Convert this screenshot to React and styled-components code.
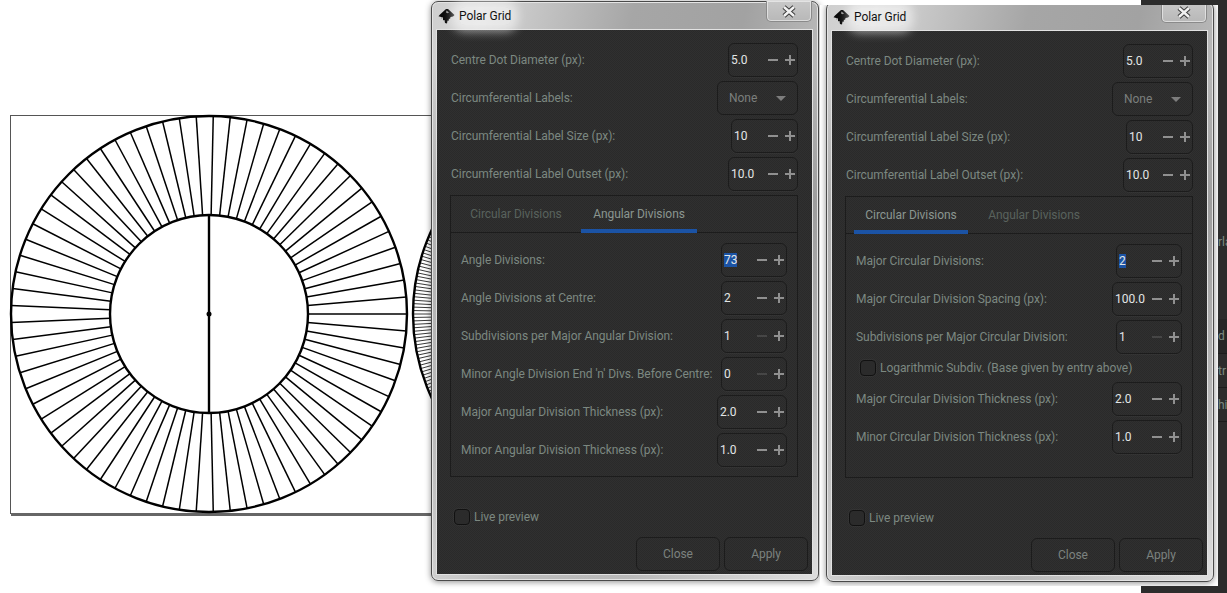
import React from 'react';
import styled, { createGlobalStyle } from 'styled-components';

const GlobalStyle = createGlobalStyle`
  html, body { margin: 0; padding: 0; background: #fff; overflow: hidden; }
  * { box-sizing: border-box; }
`;

const Desktop = styled.div`
  position: relative;
  width: 1227px;
  height: 593px;
  overflow: hidden;
  background: #fff;
  font-family: Roboto, "Liberation Sans", sans-serif;
  font-size: 12px;
  letter-spacing: -0.05px;
`;

const Drawing = styled.svg`
  position: absolute;
  left: 0;
  top: 0;
`;

const BehindPanel = styled.div`
  position: absolute;
  left: 1141px;
  top: 0;
  width: 86px;
  height: 593px;
  padding: 235px 0 0 77px;
  background: #2c2c2c;
  color: #7d8a82;
`;

const BehindRow = styled.div`
  display: flex;
  align-items: ${(p) => (p.$top ? 'flex-start' : 'center')};
  height: ${(p) => p.$h}px;
  white-space: nowrap;
  border-bottom: ${(p) => (p.$line ? '1px solid #1c1c1c' : '0')};
  background: ${(p) => (p.$dark ? '#262626' : 'transparent')};
`;

const ShotClip = styled.div`
  position: absolute;
  left: 820px;
  top: 5px;
  width: 398px;
  height: 581px;
  overflow: hidden;
  background: #fff;
`;

const Window = styled.div`
  position: absolute;
  left: ${(p) => p.$left}px;
  top: ${(p) => p.$top}px;
  width: 388px;
  height: 580px;
  padding: 28px 6px 6px 5px;
  border: 1px solid #4a4a4a;
  border-radius: 7px;
  background:
    linear-gradient(180deg, rgba(255, 255, 255, 0) 0 60px, rgba(70, 70, 70, 0.28) 200px, rgba(70, 70, 70, 0.12) 420px, rgba(255, 255, 255, 0.25) 100%),
    linear-gradient(102deg, #cfcfcf 0%, #d6d6d6 10%, #a6a6a6 40%, #a2a2a2 62%, #bdbdbd 82%, #d4d4d4 100%);
  box-shadow: 0 1px 6px rgba(0, 0, 0, 0.45), inset 0 0 0 1px #e4e4e4;
`;

const TitleBar = styled.div`
  position: absolute;
  left: 6px;
  top: 5px;
  display: flex;
  align-items: center;
  gap: 4px;
  color: #111;
  font-size: 12px;
  line-height: 18px;
`;

const TitleText = styled.span`
  background: rgba(255, 255, 255, 0.5);
  box-shadow: 0 0 10px 7px rgba(255, 255, 255, 0.5);
  border-radius: 6px;
`;

const CloseButton = styled.div`
  position: absolute;
  right: 6px;
  top: -1px;
  width: 46px;
  height: 21px;
  display: flex;
  align-items: center;
  justify-content: center;
  border: 1px solid #8a8a8a;
  border-top: 0;
  border-radius: 0 0 5px 5px;
  background: linear-gradient(#c8c8c8, #b8b8b8);
  box-shadow: inset 0 0 0 1px rgba(255, 255, 255, 0.5);
`;

const Body = styled.div`
  display: flex;
  flex-direction: column;
  height: 544px;
  padding: 13px 14px 0;
  background-color: #2d2d2d;
  background-image: conic-gradient(#2a2a2a 25%, #303030 0 50%, #2a2a2a 0 75%, #303030 0);
  background-size: 2px 2px;
  box-shadow: 0 0 0 1px #e2e2e2;
`;

const Rows = styled.div`
  display: flex;
  flex-direction: column;
  gap: 4px;
`;

const Row = styled.div`
  display: flex;
  align-items: center;
  justify-content: space-between;
  height: 34px;
`;

const Label = styled.span`
  color: #7c8881;
  white-space: nowrap;
`;

const Spin = styled.div`
  display: flex;
  flex: none;
  align-items: center;
  width: ${(p) => p.$w}px;
  height: 34px;
  padding: 0 2px;
  border: 1px solid #1c1c1c;
  border-radius: 6px;
  box-shadow: 0 1px 0 rgba(255, 255, 255, 0.03);
`;

const Value = styled.span`
  color: #e2e6e6;
  line-height: 14px;
  background: ${(p) => (p.$selected ? '#1b53a5' : 'transparent')};
`;

const SpinIcons = styled.div`
  display: flex;
  gap: 7px;
  margin-left: auto;
`;

const SpinIcon = styled.svg`
  display: block;
  width: 10px;
  height: 10px;
  fill: ${(p) => (p.$off ? '#464646' : '#909090')};
`;

const Select = styled.div`
  display: flex;
  align-items: center;
  justify-content: space-between;
  width: 81px;
  height: 34px;
  padding: 0 11px 0 11px;
  color: #7b7f7d;
  border: 1px solid #1c1c1c;
  border-radius: 6px;
`;

const Arrow = styled.span`
  width: 0;
  height: 0;
  border-left: 5px solid transparent;
  border-right: 5px solid transparent;
  border-top: 5px solid #7d7d7d;
`;

const TabBox = styled.div`
  display: flex;
  flex-direction: column;
  height: 282px;
  margin: 4px 0 0 -1px;
  border: 1px solid #1c1c1c;
`;

const TabHeader = styled.div`
  display: flex;
  flex: none;
  height: 37px;
  padding-left: 8px;
  border-bottom: 1px solid #1c1c1c;
`;

const Tab = styled.div`
  display: flex;
  align-items: center;
  justify-content: center;
  width: ${(p) => p.$w}px;
  height: 37px;
  margin-right: ${(p) => p.$gap}px;
  padding-bottom: 2px;
  color: ${(p) => (p.$active ? '#8b9690' : '#59625d')};
  box-shadow: ${(p) => (p.$active ? 'inset 0 -4px 0 #1b53a5' : 'none')};
`;

const TabRows = styled(Rows)`
  padding: 10px 10px 0 10px;
`;

const CheckRow = styled.div`
  display: flex;
  align-items: center;
  gap: 4px;
  height: ${(p) => p.$h}px;
  margin: ${(p) => p.$margin};
  color: #7c8881;
`;

const Box = styled.span`
  width: 16px;
  height: 16px;
  border: 1px solid #111;
  border-radius: 4px;
  background: #2b2b2b;
  box-shadow: 0 0 0 1px rgba(255, 255, 255, 0.03);
`;

const Footer = styled.div`
  display: flex;
  justify-content: flex-end;
  gap: 4px;
  margin: 10px -10px 0 0;
`;

const Button = styled.div`
  display: flex;
  align-items: center;
  justify-content: center;
  width: 84px;
  height: 34px;
  color: #7c827f;
  border: 1px solid #1c1c1c;
  border-radius: 6px;
`;

const R_OUT = 198;
const R_IN = 99;

// rays run from the +x axis, counter-clockwise, as the polar grid extension draws them
const Wheel = ({ cx, cy, divisions, width, color, major }) => {
  const rays = [];
  for (let k = 0; k < divisions; k++) {
    const a = (k * 2 * Math.PI) / divisions;
    rays.push(
      <line
        key={k}
        x1={cx + R_IN * Math.cos(a)}
        y1={cy - R_IN * Math.sin(a)}
        x2={cx + R_OUT * Math.cos(a)}
        y2={cy - R_OUT * Math.sin(a)}
        stroke={color}
        strokeWidth={width}
      />
    );
  }
  return (
    <g>
      {rays}
      <circle cx={cx} cy={cy} r={R_OUT} fill="none" stroke="#000" strokeWidth="2.4" />
      <circle cx={cx} cy={cy} r={R_IN} fill="none" stroke="#000" strokeWidth="2.4" />
      {major && (
        <>
          <line x1={cx} y1={cy - R_IN} x2={cx} y2={cy + R_IN} stroke="#000" strokeWidth="2.4" />
          <circle cx={cx} cy={cy} r="2.5" fill="#000" />
        </>
      )}
    </g>
  );
};

const InkscapeIcon = () => (
  <svg width="17" height="16" viewBox="0 0 17 16">
    <path
      d="M8 1 L10 1 L16.5 7 L15 8.5 L12.5 9 L12 11 L11 10.5 L10.5 13 L9.5 12.5 L9 15.5 L7 15 L6.5 12 L5 12.2 L5 9.5 L0.5 8.2 L2 6.5 Z"
      fill="#0a0a0a"
    />
    <path d="M8.5 2.5 L11 4.5 L9.5 5.2 L8 4.6 Z" fill="#9a9a9a" />
    <path d="M3 9.4 L4.6 9.9 L3.6 10.5 Z" fill="#444" />
  </svg>
);

const CloseGlyph = () => (
  <svg width="16" height="13" viewBox="0 0 16 13">
    <path d="M3 2 L13 11 M13 2 L3 11" stroke="#3c3c3c" strokeWidth="4.4" fill="none" />
    <path d="M3 2 L13 11 M13 2 L3 11" stroke="#f2f2f2" strokeWidth="2.4" fill="none" />
  </svg>
);

const SpinBox = ({ value, w, selected, minusOff }) => (
  <Spin $w={w}>
    <Value $selected={selected}>{value}</Value>
    <SpinIcons>
      <SpinIcon viewBox="0 0 10 10" $off={minusOff}>
        <rect x="0" y="4" width="10" height="2" />
      </SpinIcon>
      <SpinIcon viewBox="0 0 10 10">
        <rect x="0" y="4" width="10" height="2" />
        <rect x="4" y="0" width="2" height="10" />
      </SpinIcon>
    </SpinIcons>
  </Spin>
);

const topRows = [
  { label: 'Centre Dot Diameter (px):', value: '5.0', w: 70 },
  { label: 'Circumferential Labels:', select: 'None' },
  { label: 'Circumferential Label Size (px):', value: '10', w: 67 },
  { label: 'Circumferential Label Outset (px):', value: '10.0', w: 70 },
];

const angularRows = [
  { label: 'Angle Divisions:', value: '73', w: 66, selected: true },
  { label: 'Angle Divisions at Centre:', value: '2', w: 66 },
  { label: 'Subdivisions per Major Angular Division:', value: '1', w: 66, minusOff: true },
  { label: "Minor Angle Division End 'n' Divs. Before Centre:", value: '0', w: 66, minusOff: true },
  { label: 'Major Angular Division Thickness (px):', value: '2.0', w: 70 },
  { label: 'Minor Angular Division Thickness (px):', value: '1.0', w: 70 },
];

const circularRows = [
  { label: 'Major Circular Divisions:', value: '2', w: 66, selected: true },
  { label: 'Major Circular Division Spacing (px):', value: '100.0', w: 70 },
  { label: 'Subdivisions per Major Circular Division:', value: '1', w: 66, minusOff: true },
  { check: 'Logarithmic Subdiv. (Base given by entry above)' },
  { label: 'Major Circular Division Thickness (px):', value: '2.0', w: 70 },
  { label: 'Minor Circular Division Thickness (px):', value: '1.0', w: 70 },
];

const RowList = ({ rows }) =>
  rows.map((r) =>
    r.check ? (
      <CheckRow key={r.check} $h={20} $margin="0 0 0 4px">
        <Box />
        {r.check}
      </CheckRow>
    ) : (
      <Row key={r.label}>
        <Label>{r.label}</Label>
        {r.select ? (
          <Select>
            {r.select}
            <Arrow />
          </Select>
        ) : (
          <SpinBox value={r.value} w={r.w} selected={r.selected} minusOff={r.minusOff} />
        )}
      </Row>
    )
  );

const Dialog = ({ left, top, active, rows }) => (
  <Window $left={left} $top={top}>
    <TitleBar>
      <InkscapeIcon />
      <TitleText>Polar Grid</TitleText>
    </TitleBar>
    <CloseButton>
      <CloseGlyph />
    </CloseButton>
    <Body>
      <Rows>
        <RowList rows={topRows} />
      </Rows>
      <TabBox>
        <TabHeader>
          <Tab $w={114} $gap={8} $active={active === 'circular'}>Circular Divisions</Tab>
          <Tab $w={116} $gap={0} $active={active === 'angular'}>Angular Divisions</Tab>
        </TabHeader>
        <TabRows>
          <RowList rows={rows} />
        </TabRows>
      </TabBox>
      <CheckRow $h={20} $margin="30px 0 0 3px">
        <Box />
        Live preview
      </CheckRow>
      <Footer>
        <Button>Close</Button>
        <Button>Apply</Button>
      </Footer>
    </Body>
  </Window>
);

const App = () => (
  <Desktop>
    <GlobalStyle />
    <Drawing width="432" height="593" viewBox="0 0 432 593">
      <rect x="10.5" y="115.5" width="430" height="398" fill="#fff" stroke="#555" strokeWidth="1" />
      <rect x="11" y="513" width="421" height="3" fill="#666" />
      <Wheel cx={611} cy={314} divisions={360} width={0.9} color="#222" />
      <Wheel cx={209} cy={314} divisions={73} width={1.5} color="#000" major />
    </Drawing>
    <BehindPanel>
      <BehindRow $h={84} $top>rla</BehindRow>
      <BehindRow $h={35} $line $dark>d I</BehindRow>
      <BehindRow $h={34} $line>tr</BehindRow>
      <BehindRow $h={34} $line>hi</BehindRow>
    </BehindPanel>
    <Dialog left={431} top={1} active="angular" rows={angularRows} />
    <ShotClip>
      <Dialog left={6} top={-3} active="circular" rows={circularRows} />
    </ShotClip>
  </Desktop>
);

export default App;
